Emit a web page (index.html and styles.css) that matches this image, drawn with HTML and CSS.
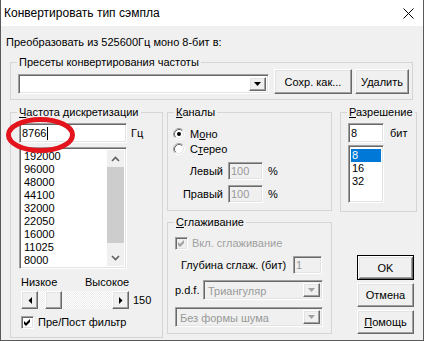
FILE: index.html
```html
<!DOCTYPE html>
<html lang="ru">
<head>
<meta charset="utf-8">
<title>Конвертировать тип сэмпла</title>
<link rel="stylesheet" href="styles.css">
</head>
<body>
<div class="window">
  <header class="titlebar">
    <span class="title">Конвертировать тип сэмпла</span>
    <svg class="close" width="11" height="11" viewBox="0 0 11 11"><path d="M0.5 0.5L10.5 10.5M10.5 0.5L0.5 10.5" stroke="#000" stroke-width="1"/></svg>
  </header>
  <main class="dialog">
    <p class="caption">Преобразовать из 525600Гц моно 8-бит в:</p>
    <fieldset class="group presets">
      <legend>Пресеты конвертирования частоты</legend>
      <div class="presets-row">
        <div class="combo combo-presets"><span class="combo-text"></span><span class="drop"><svg width="7" height="4" viewBox="0 0 7 4"><polygon points="0,0 7,0 3.5,4" fill="#000"/></svg></span></div>
        <button class="btn btn-save">Сохр. как...</button>
        <button class="btn btn-del">Удалить</button>
      </div>
    </fieldset>
    <div class="main">
      <fieldset class="group rate">
        <legend><u>Ч</u>астота дискретизации</legend>
        <div class="rate-row">
          <div class="edit rate-edit">8766<span class="caret"></span></div>
          <span class="unit-hz">Гц</span>
        </div>
        <div class="listbox rate-list">
          <ul class="items">
            <li>192000</li>
            <li>96000</li>
            <li>48000</li>
            <li>44100</li>
            <li>32000</li>
            <li>22050</li>
            <li>16000</li>
            <li>11025</li>
            <li>8000</li>
          </ul>
          <div class="vscroll">
            <span class="sb-arrow"><svg width="9" height="6" viewBox="0 0 9 6"><path d="M1 5L4.5 1.5L8 5" fill="none" stroke="#606060" stroke-width="1.6"/></svg></span>
            <span class="sb-thumb"></span>
            <span class="sb-track"></span>
            <span class="sb-arrow"><svg width="9" height="6" viewBox="0 0 9 6"><path d="M1 1L4.5 4.5L8 1" fill="none" stroke="#606060" stroke-width="1.6"/></svg></span>
          </div>
        </div>
        <div class="range-labels"><span class="low">Низкое</span><span>Высокое</span></div>
        <div class="slider-row">
          <div class="hscroll">
            <span class="raised hbtn"><svg width="4" height="7" viewBox="0 0 4 7"><polygon points="4,0 4,7 0.5,3.5" fill="#000"/></svg></span>
            <span class="htrack"><span class="raised hthumb"></span></span>
            <span class="raised hbtn"><svg width="4" height="7" viewBox="0 0 4 7"><polygon points="0,0 0,7 3.5,3.5" fill="#000"/></svg></span>
          </div>
          <span class="slider-value">150</span>
        </div>
        <div class="check-row filter-row">
          <span class="check"><svg width="9" height="9" viewBox="0 0 9 9"><polygon points="1,3 3,5 7,1 7,4 3,8 1,6" fill="#000"/></svg></span>
          <span class="check-label">Пре/Пост фильтр</span>
        </div>
      </fieldset>

      <div class="mid">
        <fieldset class="group channels">
          <legend><u>К</u>аналы</legend>
          <div class="radio-row first">
            <svg class="radio" width="12" height="12" viewBox="0 0 12 12">
              <circle cx="6" cy="6" r="5" fill="#fff"/>
              <path d="M9.89 2.11A5.5 5.5 0 0 0 2.11 9.89" fill="none" stroke="#a0a0a0"/>
              <path d="M9.18 2.82A4.5 4.5 0 0 0 2.82 9.18" fill="none" stroke="#696969"/>
              <path d="M9.89 2.11A5.5 5.5 0 0 1 2.11 9.89" fill="none" stroke="#fff"/>
              <path d="M9.18 2.82A4.5 4.5 0 0 1 2.82 9.18" fill="none" stroke="#e3e3e3"/>
              <circle cx="6" cy="6" r="2" fill="#000"/>
            </svg>
            <span class="radio-label">М<u>о</u>но</span>
          </div>
          <div class="radio-row">
            <svg class="radio" width="12" height="12" viewBox="0 0 12 12">
              <circle cx="6" cy="6" r="5" fill="#fff"/>
              <path d="M9.89 2.11A5.5 5.5 0 0 0 2.11 9.89" fill="none" stroke="#a0a0a0"/>
              <path d="M9.18 2.82A4.5 4.5 0 0 0 2.82 9.18" fill="none" stroke="#696969"/>
              <path d="M9.89 2.11A5.5 5.5 0 0 1 2.11 9.89" fill="none" stroke="#fff"/>
              <path d="M9.18 2.82A4.5 4.5 0 0 1 2.82 9.18" fill="none" stroke="#e3e3e3"/>
            </svg>
            <span class="radio-label">С<u>т</u>ерео</span>
          </div>
          <div class="pct-row left-row">
            <span class="pct-label">Левый</span>
            <div class="edit disabled pct-edit">100</div>
            <span class="pct-sign">%</span>
          </div>
          <div class="pct-row right-row">
            <span class="pct-label">Правый</span>
            <div class="edit disabled pct-edit">100</div>
            <span class="pct-sign">%</span>
          </div>
        </fieldset>

        <fieldset class="group dither">
          <legend><u>С</u>глаживание</legend>
          <div class="check-row dither-check">
            <span class="check disabled"><svg width="9" height="9" viewBox="0 0 9 9"><polygon points="1,3 3,5 7,1 7,4 3,8 1,6" fill="#a0a0a0"/></svg></span>
            <span class="check-label muted">Вкл. сглаживание</span>
          </div>
          <div class="depth-row">
            <span class="depth-label">Глубина сглаж. (бит)</span>
            <div class="edit disabled depth-edit">1</div>
          </div>
          <div class="pdf-row">
            <span class="pdf-label">p.d.f.</span>
            <div class="combo disabled pdf-combo"><span class="combo-text">Триангуляр</span><span class="drop"><svg width="7" height="4" viewBox="0 0 7 4"><polygon points="0,0 7,0 3.5,4" fill="#a0a0a0"/></svg></span></div>
          </div>
          <div class="combo disabled shape-combo"><span class="combo-text">Без формы шума</span><span class="drop"><svg width="7" height="4" viewBox="0 0 7 4"><polygon points="0,0 7,0 3.5,4" fill="#a0a0a0"/></svg></span></div>
        </fieldset>
      </div>

      <div class="right">
        <fieldset class="group resolution">
          <legend><u>Р</u>азрешение</legend>
          <div class="bits-row">
            <div class="edit bits-edit">8</div>
            <span class="unit-bits">бит</span>
          </div>
          <div class="listbox bits-list">
            <ul class="items">
              <li class="selected">8</li>
              <li>16</li>
              <li>32</li>
            </ul>
          </div>
        </fieldset>
        <div class="actions">
          <button class="btn btn-default">OK</button>
          <button class="btn">Отмена</button>
          <button class="btn"><u>П</u>омощь</button>
        </div>
      </div>
    </div>
  </main>
  <svg class="annotation" width="80" height="50" viewBox="0 0 80 50"><ellipse cx="39.5" cy="25" rx="32" ry="15.5" fill="none" stroke="#e3141c" stroke-width="5"/></svg>
</div>
</body>
</html>
```
FILE: styles.css
```css
* { box-sizing: border-box; }
html, body { margin: 0; padding: 0; }
body {
  width: 424px;
  height: 341px;
  overflow: hidden;
  background: #3a3a3a;
  font-family: "Liberation Sans", Arial, sans-serif;
  font-size: 11px;
  color: #000;
}
u { text-decoration: underline; text-underline-offset: 1px; }

.window {
  position: relative;
  width: 424px;
  height: 341px;
  background: #f0f0f0;
  border: 1px solid #5a5a5a;
  border-top: 0;
  display: flex;
  flex-direction: column;
}

.titlebar {
  height: 26px;
  flex: none;
  background: #fff;
  display: flex;
  align-items: center;
  padding-left: 3px;
}
.title { flex: 1; font-size: 12px; line-height: 16px; }
.close { margin-right: 9px; display: block; }

.dialog {
  flex: 1;
  padding: 10px 0 0 5px;
  display: flex;
  flex-direction: column;
}
.caption { margin: 0; line-height: 13px; }

/* group boxes */
.group {
  margin: 0;
  padding: 0;
  min-width: 0;
  border: 1px solid #d5d5d5;
}
.group legend {
  padding: 0 2px;
  margin-left: 6px;
  line-height: 13px;
  font-size: 11px;
}

/* 3D frames */
.raised, .btn, .drop {
  background: #f0f0f0;
  border: 1px solid;
  border-color: #fff #696969 #696969 #fff;
  box-shadow: inset -1px -1px #a0a0a0, inset 1px 1px #e3e3e3;
}
.edit, .listbox, .combo, .check {
  border: 1px solid;
  border-color: #a0a0a0 #fff #fff #a0a0a0;
  box-shadow: inset 1px 1px #696969, inset -1px -1px #e3e3e3;
  background: #fff;
}
.edit { display: flex; align-items: center; padding: 0 2px; line-height: 13px; }
.edit.disabled, .combo.disabled, .check.disabled { background: #f0f0f0; color: #999; }

.btn {
  font-family: inherit;
  font-size: 11px;
  color: #000;
  padding: 0;
  display: flex;
  align-items: center;
  justify-content: center;
}
.btn-default {
  border: 1px solid #000;
  box-shadow: inset 1px 1px #fff, inset -1px -1px #696969, inset 2px 2px #e3e3e3, inset -2px -2px #a0a0a0;
}

.combo { display: flex; padding: 2px; height: 20px; }
.combo-text { flex: 1; line-height: 16px; padding-left: 2px; }
.drop {
  width: 17px;
  display: flex;
  align-items: center;
  justify-content: center;
}
.drop svg { display: block; }

/* presets */
.presets { width: 403px; margin: 7px 0 0 4px; }
.presets-row {
  display: flex;
  align-items: flex-start;
  padding: 0 0 5px 7px;
}
.combo-presets { width: 251px; margin-top: 5px; }
.btn-save { width: 78px; height: 25px; margin-left: 5px; }
.btn-del { width: 54px; height: 25px; margin-left: 3px; }

/* main row */
.main {
  display: flex;
  align-items: flex-start;
  margin: 6px 0 0 4px;
}

/* sample rate */
.rate { width: 153px; padding-bottom: 8px; }
.rate-row { display: flex; align-items: center; margin: 4px 0 0 8px; height: 20px; }
.rate-edit { width: 108px; height: 20px; }
.caret { width: 1px; height: 13px; background: #000; margin-left: 1px; }
.unit-hz { margin-left: 4px; }

.listbox { display: flex; overflow: hidden; padding: 2px; }
.rate-list { width: 108px; height: 122px; margin: 4px 0 0 8px; }
.items { list-style: none; margin: 0; padding: 0; flex: 1; }
.items li { line-height: 13px; height: 13px; padding-left: 2px; }
.vscroll { width: 17px; display: flex; flex-direction: column; background: #f0f0f0; }
.sb-arrow { height: 17px; display: flex; align-items: center; justify-content: center; }
.sb-arrow svg { display: block; }
.sb-thumb { height: 76px; background: #cdcdcd; }
.sb-track { flex: 1; }

.range-labels { display: flex; margin: 7px 0 0 10px; line-height: 13px; }
.low { width: 64px; }

.slider-row { display: flex; align-items: center; margin: 2px 0 0 10px; height: 18px; }
.hscroll { display: flex; width: 108px; height: 18px; }
.hbtn { width: 17px; display: flex; align-items: center; justify-content: center; }
.hbtn svg { display: block; }
.htrack {
  flex: 1;
  display: flex;
  padding-left: 7px;
  background: repeating-conic-gradient(#fff 0 25%, #ececec 0 50%) 0 0 / 2px 2px;
}
.hthumb { width: 17px; }
.slider-value { margin-left: 4px; }

.check-row { display: flex; align-items: center; height: 13px; line-height: 13px; }
.check { width: 13px; height: 13px; flex: none; padding: 1px; display: flex; }
.check svg { display: block; }
.check-label { margin-left: 4px; }
.filter-row { margin: 7px 0 0 10px; }
.muted { color: #a0a0a0; }

/* middle column */
.mid { width: 165px; margin-left: 4px; display: flex; flex-direction: column; }
.channels { padding-bottom: 7px; }
.radio-row { display: flex; align-items: center; height: 15px; margin-left: 5px; }
.radio-row.first { margin-top: 7px; }
.radio { display: block; flex: none; }
.radio-label { margin-left: 5px; }
.pct-row { display: flex; align-items: center; height: 18px; }
.left-row { margin-top: 6px; }
.right-row { margin-top: 5px; }
.pct-label { width: 55px; text-align: right; }
.pct-edit { width: 35px; height: 18px; margin-left: 5px; }
.pct-sign { margin-left: 5px; }

.dither { margin-top: 5px; padding-bottom: 6px; }
.dither-check { margin: 8px 0 0 7px; }
.depth-row { display: flex; align-items: center; height: 18px; margin: 6px 0 0 13px; }
.depth-label { width: 112px; }
.depth-edit { width: 29px; height: 18px; }
.pdf-row { display: flex; align-items: center; height: 20px; margin: 6px 0 0 7px; }
.pdf-label { width: 28px; }
.pdf-combo { width: 120px; }
.shape-combo { width: 148px; margin: 7px 0 0 7px; }

/* right column */
.right { width: 77px; margin-left: 8px; display: flex; flex-direction: column; }
.resolution { padding-bottom: 8px; }
.bits-row { display: flex; align-items: center; height: 20px; margin: 4px 0 0 7px; }
.bits-edit { width: 36px; height: 20px; }
.unit-bits { margin-left: 6px; }
.bits-list { width: 36px; height: 58px; margin: 2px 0 0 7px; padding: 3px 2px 2px; }
.bits-list li { padding-left: 1px; }
.items li.selected { background: #0078d7; color: #fff; }

.actions { display: flex; flex-direction: column; gap: 3px; margin: 43px 0 0 17px; }
.actions .btn { width: 57px; height: 24px; }
.actions .btn-default { height: 25px; }

/* hand-drawn red annotation over the rate field */
.annotation { position: absolute; left: 0; top: 110px; pointer-events: none; }
```
